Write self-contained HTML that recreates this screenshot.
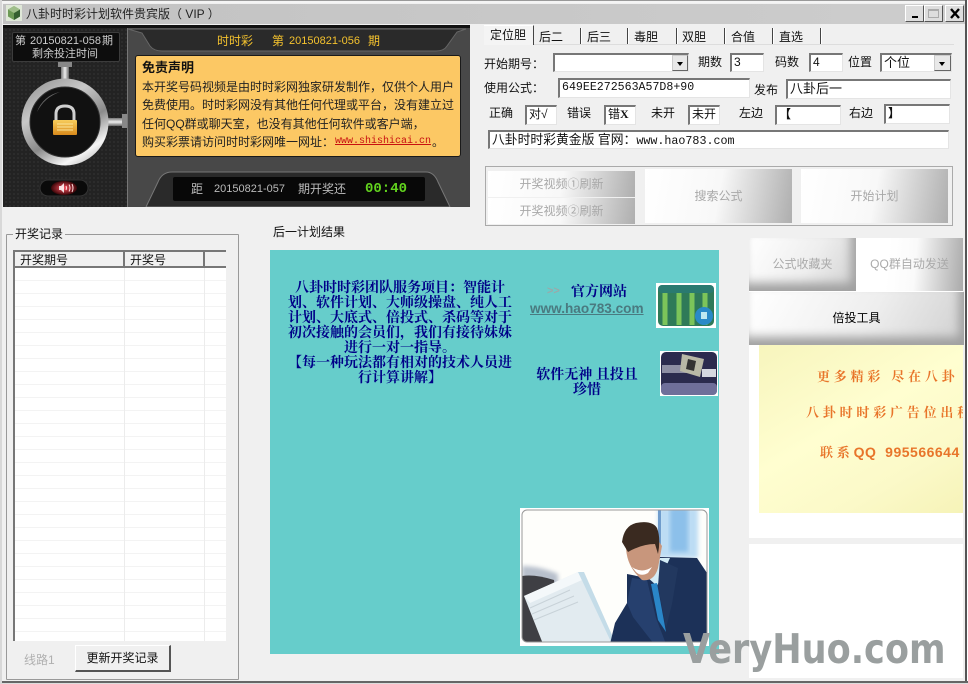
<!DOCTYPE html>
<html><head><meta charset="utf-8"><style>
html,body{margin:0;padding:0}
body{width:968px;height:684px;overflow:hidden;position:relative;background:#f0f0f0;font:12px "Liberation Sans","WenQuanYi Zen Hei","Noto Sans CJK SC",sans-serif;color:#111}
div,span.t,a.t{position:absolute;box-sizing:border-box}
.t{white-space:nowrap;line-height:16px;height:16px}
.s{font-family:"Liberation Mono","WenQuanYi Zen Hei",monospace}
.in{background:#fff;border:1px solid #e4e4e4;border-top:2px solid #777;border-left:2px solid #777;line-height:15px;padding-left:2px;white-space:nowrap;overflow:hidden}
.dd{background:#e8e8e8;border:1px solid #ccc;border-right-color:#666;border-bottom-color:#666}
.dd:after{content:"";position:absolute;left:4px;top:6px;border:3px solid transparent;border-top:4px solid #000}
.btn{background:linear-gradient(100deg,#fff 0,#f8f8f8 50%,#aeaeae 100%);color:#a8a8a8;text-align:center;font-size:12px}
.bev{box-shadow:inset -5px -8px 10px #a0a0a0;background:linear-gradient(120deg,#fff,#eee 55%,#d0d0d0)}
.sep{position:absolute;top:28px;width:1px;height:16px;background:#444;border-right:1px solid #fff;box-sizing:content-box}
.n{color:#000088;font:bold 14px/15px "Noto Serif CJK SC","WenQuanYi Zen Hei",serif;text-align:center;white-space:nowrap}
.o{color:#e8752a;font:bold 13px/16px "Noto Serif CJK SC","WenQuanYi Zen Hei",serif;white-space:nowrap;letter-spacing:3.800px}
</style></head><body>

<!-- frame -->
<div style="left:0;top:0;width:968px;height:3px;background:#f4f4f4;border-top:1px solid #999"></div>
<div style="left:965px;top:0;width:3px;height:684px;background:#fff;border-left:2px solid #555"></div>
<div style="left:0;top:681px;width:968px;height:3px;background:#666;border-bottom:1px solid #ddd"></div>
<div style="left:0;top:0;width:2px;height:684px;background:#d8d8d8"></div>

<!-- titlebar -->
<div style="left:3px;top:4px;width:962px;height:20px;background:linear-gradient(90deg,#c2c2c2,#cdcdcd)"></div>
<svg style="position:absolute;left:6px;top:5px" width="16" height="16" viewBox="0 0 16 16"><rect width="16" height="16" fill="#dfe8d8"/><path d="M8 1L14 4.5V11.5L8 15 2 11.5V4.5z" fill="#6d9a56"/><path d="M8 8L14 4.5V11.5L8 15z" fill="#355f30"/><path d="M8 1L14 4.5 8 8 2 4.5z" fill="#9fbe8a"/></svg>
<span class="t" style="left:26px;top:6px;font-size:12px;color:#222">八卦时时彩计划软件贵宾版（ VIP ）</span>
<div style="left:905px;top:5px;width:19px;height:17px;background:#ddd;border:1px solid #fff;border-right-color:#555;border-bottom-color:#555"><div style="left:6px;top:10px;width:6px;height:2px;background:#000"></div></div>
<div style="left:924px;top:5px;width:19px;height:17px;background:#ddd;border:1px solid #fff;border-right-color:#555;border-bottom-color:#555"><div style="left:3px;top:3px;width:11px;height:9px;border:1px solid #aaa;border-top-width:2px"></div></div>
<div style="left:945px;top:5px;width:19px;height:17px;background:#ddd;border:1px solid #fff;border-right-color:#555;border-bottom-color:#555"><svg style="position:absolute;left:3px;top:2px" width="12" height="11"><path d="M2 1L10 10M10 1L2 10" stroke="#000" stroke-width="2.4"/></svg></div>

<!-- dark panel -->
<div style="left:3px;top:25px;width:467px;height:182px;background:#444"></div>
<svg style="position:absolute;left:3px;top:25px" width="467" height="182" viewBox="3 25 467 182">
<defs>
<pattern id="p" width="4" height="4" patternUnits="userSpaceOnUse"><rect width="4" height="4" fill="#232323"/><circle cx="2" cy="2" r="1" fill="#2f2f2f"/></pattern>
<linearGradient id="ring" x1="0.2" y1="0" x2="0.8" y2="1"><stop offset="0" stop-color="#9a9a9a"/><stop offset=".3" stop-color="#c8c8c8"/><stop offset=".6" stop-color="#8a8a8a"/><stop offset=".85" stop-color="#f6f6f6"/><stop offset="1" stop-color="#bbb"/></linearGradient>
<linearGradient id="steel" x1="0" y1="0" x2="0" y2="1"><stop offset="0" stop-color="#777"/><stop offset=".5" stop-color="#eee"/><stop offset="1" stop-color="#666"/></linearGradient>
<linearGradient id="steelh" x1="0" y1="0" x2="1" y2="0"><stop offset="0" stop-color="#777"/><stop offset=".5" stop-color="#eee"/><stop offset="1" stop-color="#666"/></linearGradient>
<linearGradient id="lock" x1="0" y1="0" x2="0" y2="1"><stop offset="0" stop-color="#f7cd5c"/><stop offset="1" stop-color="#d98a1c"/></linearGradient>
<radialGradient id="sp"><stop offset="0" stop-color="#ff5060"/><stop offset="1" stop-color="#3a0608"/></radialGradient>
</defs>
<rect x="3" y="25" width="124" height="182" fill="url(#p)"/>
<rect x="3" y="25" width="467" height="3" fill="#111"/>
<rect x="127" y="28" width="343" height="179" fill="#484848"/>
<rect x="127" y="28" width="1" height="179" fill="#777"/>
<path d="M128 29H466L457 32 447 46Q444 51 436 51H162Q154 51 150 46L142 33z" fill="#2a2a2a" stroke="#666" stroke-width="1"/>
<path d="M146 207L158 182Q162 172 172 172H426Q434 172 438 182L450 207z" fill="#2a2a2a" stroke="#777" stroke-width="1"/>
<rect x="173" y="177" width="252" height="24" rx="2" fill="#080808"/>
<rect x="61" y="62" width="8" height="18" fill="url(#steelh)"/>
<rect x="58" y="62" width="14" height="5" fill="#888"/>
<rect x="106" y="118" width="17" height="8" fill="url(#steel)"/>
<rect x="122" y="114" width="5" height="14" fill="#888"/>
<circle cx="65" cy="122" r="43.500" fill="url(#ring)"/>
<circle cx="65" cy="122" r="35" fill="#111" stroke="#333"/>
<path d="M37 112A30 30 0 0 1 60 92 40 40 0 0 0 37 112z" fill="#666"/>
<path d="M56 122V114Q56 106 65 106 74 106 74 114V122" fill="none" stroke="#cfcfcf" stroke-width="3"/>
<rect x="53" y="120" width="24" height="15" rx="1" fill="url(#lock)"/>
<path d="M57 124H73M57 127H73M57 130H73" stroke="#fbe59a" stroke-width="1"/>
<rect x="40" y="180" width="48" height="16" rx="8" fill="#0a0a0a" stroke="#333"/>
<ellipse cx="64" cy="188" rx="13" ry="7" fill="url(#sp)"/>
<path d="M59 186H61L64 183V193L61 190H59z" fill="#fff" opacity=".85"/><path d="M66 186Q67 188 66 190M69 184.500Q71 188 69 191.500M72 184Q74 188 72 192" fill="none" stroke="#fdd" stroke-width="1"/>
</svg>
<div style="left:12px;top:32px;width:108px;height:30px;background:#0d0d0d;border:1px solid #3c3c3c;border-radius:2px"></div>
<span class="t" style="left:15px;top:33px;font-size:11px;color:#ccc">第</span>
<span class="t" style="left:30px;top:33px;font-size:11px;color:#ccc">20150821-058</span>
<span class="t" style="left:102px;top:33px;font-size:11px;color:#ccc">期</span>
<span class="t" style="left:32px;top:46px;font-size:11px;color:#ccc">剩余投注时间</span>
<span class="t" style="left:217px;top:33px;font-size:12px;color:#f4c22e">时时彩</span>
<span class="t" style="left:272px;top:33px;font-size:12px;color:#f4c22e">第</span>
<span class="t" style="left:289px;top:33px;font-size:11px;color:#f4c22e">20150821-056</span>
<span class="t" style="left:368px;top:33px;font-size:12px;color:#f4c22e">期</span>
<!-- notice -->
<div style="left:135px;top:55px;width:326px;height:102px;background:#fcc864;border:1px solid #1a1a1a;border-radius:3px"></div>
<span class="t" style="left:142px;top:60px;font-size:13px;font-weight:bold;color:#111">免责声明</span>
<span class="t" style="left:142px;top:79px;font-size:12px;color:#222">本开奖号码视频是由时时彩网独家研发制作，仅供个人用户</span>
<span class="t" style="left:142px;top:97px;font-size:12px;color:#222">免费使用。时时彩网没有其他任何代理或平台，没有建立过</span>
<span class="t" style="left:142px;top:116px;font-size:12px;color:#222">任何QQ群或聊天室，也没有其他任何软件或客户端，</span>
<span class="t" style="left:142px;top:134px;font-size:12px;color:#222">购买彩票请访问时时彩网唯一网址：</span>
<span class="t s" style="left:335px;top:134px;font-size:10px;color:#c81010;text-decoration:underline">www.shishicai.cn</span>
<span class="t" style="left:432px;top:134px;font-size:12px;color:#222">。</span>
<span class="t" style="left:191px;top:181px;font-size:12px;color:#bbb">距</span>
<span class="t" style="left:214px;top:181px;font-size:11px;color:#bbb">20150821-057</span>
<span class="t" style="left:298px;top:181px;font-size:12px;color:#bbb">期开奖还</span>
<span class="t" style="left:365px;top:181px;font:bold 14px/16px 'Liberation Mono',monospace;color:#62d31e">00:40</span>

<!-- tabs -->
<div style="left:484px;top:44px;width:470px;height:1px;background:#ddd"></div>
<div style="left:484px;top:25px;width:50px;height:20px;background:#f4f4f4;border-top:1px solid #fff;border-right:1px solid #444"></div>
<span class="t" style="left:490px;top:27px;font-size:12px">定位胆</span>
<span class="t" style="left:539px;top:29px;font-size:12px">后二</span>
<span class="t" style="left:587px;top:29px;font-size:12px">后三</span>
<span class="t" style="left:634px;top:29px;font-size:12px">毒胆</span>
<span class="t" style="left:682px;top:29px;font-size:12px">双胆</span>
<span class="t" style="left:731px;top:29px;font-size:12px">合值</span>
<span class="t" style="left:779px;top:29px;font-size:12px">直选</span>
<i class="sep" style="left:580px"></i><i class="sep" style="left:627px"></i><i class="sep" style="left:676px"></i><i class="sep" style="left:724px"></i><i class="sep" style="left:772px"></i><i class="sep" style="left:820px"></i>

<!-- form row 1 -->
<span class="t" style="left:484px;top:56px;font-size:12px">开始期号：</span>
<div class="in" style="left:553px;top:53px;width:136px;height:19px"></div>
<div class="dd" style="left:672px;top:55px;width:16px;height:16px"></div>
<span class="t" style="left:698px;top:54px;font-size:12px">期数</span>
<div class="in" style="left:730px;top:53px;width:34px;height:19px">3</div>
<span class="t" style="left:775px;top:54px;font-size:12px">码数</span>
<div class="in" style="left:809px;top:53px;width:34px;height:19px">4</div>
<span class="t" style="left:848px;top:54px;font-size:12px">位置</span>
<div class="in" style="left:880px;top:53px;width:72px;height:19px;font-size:13px">个位</div>
<div class="dd" style="left:934px;top:55px;width:17px;height:16px"></div>
<!-- row 2 -->
<span class="t" style="left:484px;top:80px;font-size:12px">使用公式：</span>
<div class="in s" style="left:558px;top:78px;width:192px;height:20px;font-size:11.600px">649EE272563A57D8+90</div>
<span class="t" style="left:754px;top:82px;font-size:12px">发布</span>
<div class="in" style="left:786px;top:79px;width:165px;height:20px;font-size:13px">八卦后一</div>
<!-- row 3 -->
<span class="t" style="left:489px;top:105px;font-size:12px">正确</span>
<div class="in" style="left:525px;top:105px;width:32px;height:20px;font-size:12px">对√</div>
<span class="t" style="left:567px;top:105px;font-size:12px">错误</span>
<div class="in" style="left:604px;top:105px;width:32px;height:20px;font-size:12px">错<b style="font-family:'Liberation Serif'">X</b></div>
<span class="t" style="left:651px;top:105px;font-size:12px">未开</span>
<div class="in" style="left:688px;top:105px;width:32px;height:20px;font-size:12px">未开</div>
<span class="t" style="left:739px;top:105px;font-size:12px">左边</span>
<div class="in" style="left:775px;top:105px;width:66px;height:20px;font-size:12px;font-weight:bold">【</div>
<span class="t" style="left:849px;top:105px;font-size:12px">右边</span>
<div class="in" style="left:884px;top:104px;width:66px;height:20px;font-size:12px;font-weight:bold">】</div>
<!-- row 4 -->
<div class="in" style="left:488px;top:130px;width:461px;height:19px;font-size:12.800px">八卦时时彩黄金版 官网：<span class="s" style="font-size:11.700px">www.hao783.com</span></div>

<!-- button group -->
<div style="left:485px;top:166px;width:468px;height:60px;border:1px solid #aaa"></div>
<div class="btn" style="left:488px;top:171px;width:147px;height:26px;line-height:26px">开奖视频①刷新</div>
<div class="btn" style="left:488px;top:198px;width:147px;height:26px;line-height:26px">开奖视频②刷新</div>
<div class="btn" style="left:645px;top:169px;width:147px;height:54px;line-height:54px">搜索公式</div>
<div class="btn" style="left:801px;top:169px;width:147px;height:54px;line-height:54px">开始计划</div>

<!-- record group -->
<div style="left:6px;top:234px;width:233px;height:446px;border:1px solid #999;border-radius:1px"></div>
<span class="t" style="left:13px;top:226px;padding:0 2px;background:#f0f0f0;font-size:12px">开奖记录</span>
<div style="left:13px;top:250px;width:213px;height:391px;background:#fff;border-left:2px solid #777;border-top:2px solid #777;background-image:repeating-linear-gradient(to bottom,transparent 0,transparent 12px,#f3f3f3 12px,#f3f3f3 13px);background-position:0 3px"></div>
<div style="left:15px;top:252px;width:211px;height:16px;background:#f0f0f0;border-bottom:2px solid #777"></div>
<div style="left:123px;top:252px;width:2px;height:14px;background:#777"></div>
<div style="left:203px;top:252px;width:2px;height:14px;background:#777"></div>
<div style="left:124px;top:268px;width:1px;height:373px;background:#ececec"></div>
<div style="left:204px;top:268px;width:1px;height:373px;background:#ececec"></div>
<span class="t" style="left:20px;top:252px;font-size:12px">开奖期号</span>
<span class="t" style="left:130px;top:252px;font-size:12px">开奖号</span>
<span class="t" style="left:24px;top:652px;font-size:12px;color:#b0b0b0">线路1</span>
<div style="left:75px;top:645px;width:96px;height:27px;background:#f0f0f0;border:1px solid #fff;border-right:2px solid #555;border-bottom:2px solid #555;text-align:center;line-height:24px;font-size:12px">更新开奖记录</div>

<!-- middle -->
<span class="t" style="left:273px;top:224px;font-size:12px">后一计划结果</span>
<div style="left:270px;top:250px;width:449px;height:404px;background:#66cdcb"></div>
<div class="n" style="left:283px;top:280px;width:234px">八卦时时彩团队服务项目：智能计<br>划、软件计划、大师级操盘、纯人工<br>计划、大底式、倍投式、杀码等对于<br>初次接触的会员们，我们有接待妹妹<br>进行一对一指导。<br>【每一种玩法都有相对的技术人员进<br>行计算讲解】</div>
<span class="t" style="left:547px;top:284px;font:bold 11px/14px 'Liberation Sans';color:#9aa">&gt;&gt;</span>
<span class="t n" style="left:571px;top:283px;line-height:16px">官方网站</span>
<span class="t" style="left:530px;top:301px;font:bold 13.600px/16px 'Liberation Sans';color:#4a7a80;text-decoration:underline">www.hao783.com</span>
<div class="n" style="left:530px;top:367px;width:114px">软件无神 且投且<br>珍惜</div>
<svg style="position:absolute;left:656px;top:283px" width="60" height="45" viewBox="0 0 60 45"><rect width="60" height="45" fill="#fff"/><rect x="2" y="2" width="56" height="41" rx="5" fill="#2f7a58"/><rect x="2" y="2" width="56" height="8" rx="4" fill="#2a7a70"/><path d="M9 10V42M23 10V42M36 10V42M49 10V42" stroke="#7cc45a" stroke-width="5"/><circle cx="48" cy="33" r="9" fill="#2a8ac8"/><rect x="45" y="29" width="6" height="7" fill="#bfe8f0"/></svg>
<svg style="position:absolute;left:660px;top:351px" width="58" height="45" viewBox="0 0 58 45"><rect width="58" height="45" fill="#fff"/><rect x="1" y="1" width="56" height="43" rx="5" fill="#2b2b4e"/><rect x="1" y="32" width="56" height="12" rx="4" fill="#6f6f9a"/><path d="M2 14H28V22H2z" fill="#cfd0dc" opacity=".6"/><path d="M22 3L44 8 40 26 20 20z" fill="#b8b8a6"/><path d="M42 18H56V26H42z" fill="#d5d8e0"/><path d="M28 8L36 10 34 20 26 18z" fill="#333"/></svg>

<!-- photo -->
<svg style="position:absolute;left:520px;top:508px" width="189" height="138" viewBox="0 0 189 138">
<defs><clipPath id="c"><rect x="2" y="2" width="185" height="132" rx="5"/></clipPath><filter id="b"><feGaussianBlur stdDeviation="2"/></filter></defs>
<rect width="189" height="138" fill="#fff"/>
<g clip-path="url(#c)">
<rect width="189" height="138" fill="#fefefb"/>
<rect x="138" y="0" width="40" height="50" fill="#bcdcf4" filter="url(#b)"/><rect x="138" y="0" width="3" height="44" fill="#6f9ccc"/><rect x="150" y="0" width="18" height="44" fill="#8cc0ea" filter="url(#b)"/>
<path d="M2 58Q20 58 38 66V90H2z" fill="#b8c0cc" filter="url(#b)"/>
<path d="M2 68Q15 66 34 72L40 136H2z" fill="#3f3f44"/>
<path d="M100 136L113 108 136 136z" fill="#f8eeb0"/>
<path d="M4 88L58 64 93 136H23z" fill="#e2ebf0"/>
<path d="M4 88L58 64 62 72 10 95z" fill="#f4f8fa"/>
<path d="M10 100L50 82M12 106L54 88M14 112L58 94" stroke="#c8d2d8" stroke-width="1"/>
<path d="M58 64L64 64 96 136H92z" fill="#c4dce8"/>
<path d="M90 136L95 115 107 95 107 66 127 70 140 49 177 50 187 65V136z" fill="#1c3158"/>
<path d="M113 109L107 95 112 70 127 72 136 110 146 136H134z" fill="#26406e"/>
<path d="M126 68L140 50 150 50 137 78z" fill="#d4ecf6"/>
<path d="M131 76L137 75 146 124 138 112z" fill="#2a86c8"/>
<path d="M140 52L158 60 152 96 146 120 138 78z" fill="#22385f"/>
<path d="M106 38Q106 58 122 72 134 74 138 60L142 38Q135 26 118 28z" fill="#c8967c"/>
<path d="M102 34Q104 18 116 15 132 12 137 20 141 30 138 46L135 36Q122 36 108 44z" fill="#3a2a20"/>
<path d="M112 59Q122 66 132 59L128 65Q121 69 116 64z" fill="#fff"/>
</g>
<rect x="2" y="2" width="185" height="132" rx="5" fill="none" stroke="#999"/>
</svg>

<!-- right column -->
<div style="left:749px;top:238px;width:214px;height:300px;background:#fff"></div>
<div class="bev" style="left:749px;top:238px;width:107px;height:53px;line-height:53px;text-align:center;font-size:12px;color:#aaa">公式收藏夹</div>
<div style="left:856px;top:238px;width:107px;height:53px;line-height:53px;text-align:center;font-size:12px;color:#aaa;background:linear-gradient(95deg,#fff 30%,#fafafa 55%,#aaa 100%)">QQ群自动发送</div>
<div class="bev" style="left:749px;top:292px;width:215px;height:53px;line-height:53px;text-align:center;font-size:12px;color:#000">倍投工具</div>
<div style="left:759px;top:345px;width:204px;height:168px;overflow:hidden;background:linear-gradient(150deg,#f7f5bd 0,#fffed0 45%,#fbf9c8 75%,#f6f3b8 100%)">
<span class="o" style="position:absolute;left:58px;top:23px">更多精彩 尽在八卦</span>
<span class="o" style="position:absolute;left:47px;top:59px">八卦时时彩广告位出租</span>
<span class="o" style="position:absolute;left:61px;top:99px">联系<span style="font:bold 14px/16px 'Liberation Sans';letter-spacing:.5px">QQ&nbsp;&nbsp;995566644</span></span>
</div>
<div style="left:749px;top:544px;width:214px;height:134px;background:#fff"></div>

<!-- watermark -->
<span class="t" style="left:683px;top:627px;height:44px;font:bold 41px/44px 'DejaVu Sans',sans-serif;color:#9a9f9f;transform-origin:0 0;transform:scaleX(.856)">VeryHuo.com</span>
</body></html>
